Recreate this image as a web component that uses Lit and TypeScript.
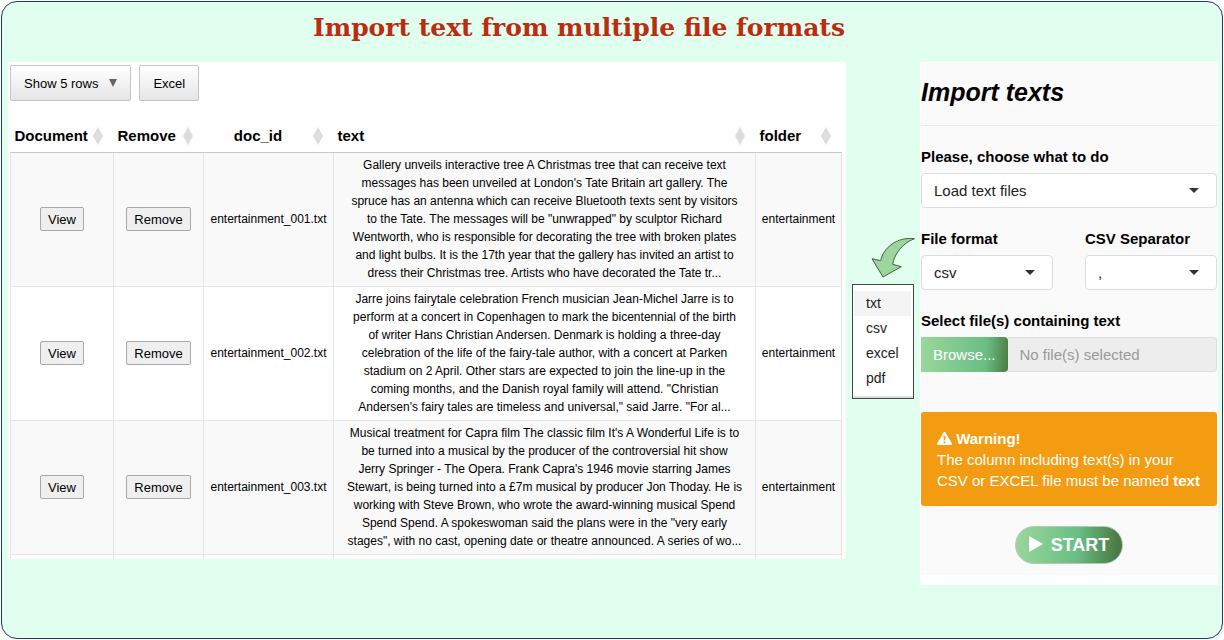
import { LitElement, html, css } from "lit";
import { customElement, state } from "lit/decorators.js";

interface DocumentRow {
  id: string;
  lines: string[];
  folder: string;
}

const ROWS: DocumentRow[] = [
  {
    id: "entertainment_001.txt",
    lines: [
      "Gallery unveils interactive tree A Christmas tree that can receive text",
      "messages has been unveiled at London's Tate Britain art gallery. The",
      "spruce has an antenna which can receive Bluetooth texts sent by visitors",
      'to the Tate. The messages will be "unwrapped" by sculptor Richard',
      "Wentworth, who is responsible for decorating the tree with broken plates",
      "and light bulbs. It is the 17th year that the gallery has invited an artist to",
      "dress their Christmas tree. Artists who have decorated the Tate tr...",
    ],
    folder: "entertainment",
  },
  {
    id: "entertainment_002.txt",
    lines: [
      "Jarre joins fairytale celebration French musician Jean-Michel Jarre is to",
      "perform at a concert in Copenhagen to mark the bicentennial of the birth",
      "of writer Hans Christian Andersen. Denmark is holding a three-day",
      "celebration of the life of the fairy-tale author, with a concert at Parken",
      "stadium on 2 April. Other stars are expected to join the line-up in the",
      'coming months, and the Danish royal family will attend. "Christian',
      'Andersen\'s fairy tales are timeless and universal," said Jarre. "For al...',
    ],
    folder: "entertainment",
  },
  {
    id: "entertainment_003.txt",
    lines: [
      "Musical treatment for Capra film The classic film It's A Wonderful Life is to",
      "be turned into a musical by the producer of the controversial hit show",
      "Jerry Springer - The Opera. Frank Capra's 1946 movie starring James",
      "Stewart, is being turned into a £7m musical by producer Jon Thoday. He is",
      "working with Steve Brown, who wrote the award-winning musical Spend",
      'Spend Spend. A spokeswoman said the plans were in the "very early',
      'stages", with no cast, opening date or theatre announced. A series of wo...',
    ],
    folder: "entertainment",
  },
];

const COLUMNS = [
  { name: "Document", cls: "c-document" },
  { name: "Remove", cls: "c-remove" },
  { name: "doc_id", cls: "c-id" },
  { name: "text", cls: "c-text" },
  { name: "folder", cls: "c-folder" },
];

@customElement("documents-table")
class DocumentsTable extends LitElement {
  static styles = css`
    :host {
      display: block;
      background: #fff;
      padding: 3px 4px 0 2px;
      font-family: "Liberation Sans", Arial, sans-serif;
      color: #000;
    }
    button {
      font-family: inherit;
      color: inherit;
      cursor: pointer;
    }
    .toolbar {
      display: flex;
      gap: 8px;
      margin-bottom: 19px;
    }
    .tool {
      display: flex;
      align-items: center;
      gap: 11px;
      height: 36px;
      padding: 0 13px;
      font-size: 13px;
      border: 1px solid #c4c4c4;
      border-radius: 2px;
      background: linear-gradient(#fff, #e6e6e6);
    }
    .tool svg {
      width: 8px;
      height: 8px;
      fill: #666;
    }
    table {
      width: 100%;
      table-layout: fixed;
      border-collapse: collapse;
    }
    .c-document { width: 103px; }
    .c-remove { width: 90px; }
    .c-id { width: 130px; }
    .c-folder { width: 86px; }
    th {
      height: 32px;
      padding: 0;
      border-bottom: 1px solid #c8c8c8;
    }
    .sort {
      display: flex;
      align-items: center;
      gap: 4px;
      width: 100%;
      padding: 0 11px 0 4px;
      border: 0;
      background: none;
      font-size: 15px;
      line-height: 20px;
      font-weight: 700;
      text-align: left;
    }
    .sort span { flex: 1; }
    .c-id .sort { text-align: center; }
    .sort svg {
      width: 10px;
      height: 18px;
      fill: #ddd;
    }
    td {
      padding: 3px 0 4px;
      border: 1px solid #e4e4e4;
      font-size: 12px;
      line-height: 18px;
      text-align: center;
      white-space: nowrap;
    }
    tbody tr:nth-child(odd) { background: #f9f9f9; }
    .action {
      height: 24px;
      padding: 0 7px;
      font-size: 13px;
      border: 1px solid #a9a9a9;
      border-radius: 2px;
      background: #efefef;
    }
    .next td {
      height: 4px;
      padding: 0;
      border-bottom: 0;
    }
  `;

  render() {
    return html`
      <div class="toolbar">
        <button class="tool" type="button">
          Show 5 rows
          <svg viewBox="0 0 8 8" aria-hidden="true"><path d="M0 0h8L4 8z" /></svg>
        </button>
        <button class="tool" type="button">Excel</button>
      </div>
      <table>
        <thead>
          <tr>
            ${COLUMNS.map(
              (c) => html`<th class=${c.cls} scope="col">
                <button class="sort" type="button">
                  <span>${c.name}</span>
                  <svg viewBox="0 0 10 18" aria-hidden="true"><path d="M5 0l5 9-5 9-5-9z" /></svg>
                </button>
              </th>`
            )}
          </tr>
        </thead>
        <tbody>
          ${ROWS.map(
            (r) => html`<tr>
              <td><button class="action" type="button">View</button></td>
              <td><button class="action" type="button">Remove</button></td>
              <td>${r.id}</td>
              <td>${r.lines.map((l, i) => (i ? html`<br />${l}` : l))}</td>
              <td>${r.folder}</td>
            </tr>`
          )}
          <tr class="next">
            <td></td><td></td><td></td><td></td><td></td>
          </tr>
        </tbody>
      </table>
    `;
  }
}

@customElement("format-menu")
class FormatMenu extends LitElement {
  static styles = css`
    :host {
      display: block;
      font-family: "Liberation Sans", Arial, sans-serif;
    }
    .arrow {
      display: block;
      width: 64px;
      height: 44px;
      margin-bottom: 4px;
      fill: #9bd79c;
      stroke: #4d5a4d;
      stroke-linejoin: round;
    }
    ul {
      list-style: none;
      margin: 0;
      padding: 6px 2px 7px 1px;
      border: 1px solid #444;
      background: #fff;
      box-shadow: inset 0 -2px 1px #ddd;
    }
    li button {
      display: block;
      width: 100%;
      padding: 0 12px;
      border: 0;
      background: none;
      font: 14px/25px "Liberation Sans", Arial, sans-serif;
      color: #222;
      text-align: left;
      cursor: pointer;
    }
    li .active { background: #f4f4f4; }
  `;

  render() {
    return html`
      <svg class="arrow" viewBox="0 0 64 44" aria-hidden="true">
        <path d="M62.500 2.700C45 .5 31 12 28.700 24.700L20 22.700 31 41 49.300 30.700 40.700 28.300C42 19 50 7 62.500 2.700z" />
      </svg>
      <ul>
        ${["txt", "csv", "excel", "pdf"].map(
          (f, i) => html`<li><button type="button" class=${i === 0 ? "active" : ""}>${f}</button></li>`
        )}
      </ul>
    `;
  }
}

@customElement("import-panel")
class ImportPanel extends LitElement {
  static styles = css`
    :host {
      display: block;
      padding: 1px 1px 10px;
      background: #fff;
      font: 15px/20px "Liberation Sans", Arial, sans-serif;
      color: #000;
    }
    .body {
      background: #fafafa;
      padding-bottom: 11px;
    }
    h2 {
      margin: 0;
      padding: 14px 0 18px;
      font-size: 25px;
      line-height: 30px;
      font-style: italic;
      border-bottom: 1px solid #e8e8e8;
    }
    .label {
      display: block;
      margin-bottom: 6px;
      font-weight: 700;
    }
    .field { margin-top: 21px; }
    .pair {
      display: grid;
      grid-template-columns: 1fr 1fr;
      gap: 32px;
    }
    .select { display: grid; }
    .select > * { grid-area: 1 / 1; }
    select {
      appearance: none;
      width: 100%;
      height: 35px;
      padding: 0 12px;
      border: 1px solid #ddd;
      border-radius: 4px;
      background: #fff;
      font: inherit;
      color: #222;
    }
    .select svg {
      align-self: center;
      justify-self: end;
      width: 10px;
      height: 5px;
      margin-right: 18px;
      fill: #333;
      pointer-events: none;
    }
    .file { display: flex; }
    .browse {
      display: flex;
      align-items: center;
      height: 35px;
      box-sizing: border-box;
      padding: 0 12px;
      border-radius: 0 4px 4px 0;
      background: linear-gradient(95deg, #9bd79c 0%, #69be84 74%, #4b7a43 100%);
      color: #fff;
      cursor: pointer;
    }
    .browse input {
      position: absolute;
      width: 1px;
      height: 1px;
      opacity: 0;
    }
    .chosen {
      flex: 1;
      min-width: 0;
      box-sizing: border-box;
      padding: 0 12px;
      border: 1px solid #ddd;
      border-left: 0;
      border-radius: 0 4px 4px 0;
      background: #ededed;
      font: inherit;
    }
    .chosen::placeholder { color: #999; opacity: 1; }
    .alert {
      margin: 40px 0 20px;
      padding: 16px 16px 15px;
      border-radius: 3px;
      background: #f39c12;
      color: #fff;
      line-height: 21px;
    }
    .alert p { margin: 0; }
    .alert svg {
      width: 15px;
      height: 13px;
      vertical-align: -1px;
      fill: #fff;
    }
    .start {
      display: flex;
      align-items: center;
      justify-content: center;
      gap: 8px;
      height: 38px;
      margin: 0 auto;
      padding: 0 13px;
      border: 1px solid #b5c9b5;
      border-radius: 19px;
      background: linear-gradient(95deg, #9bd79c 0%, #69be84 58%, #4b7a43 95%);
      color: #fff;
      font: 700 18px/20px "Liberation Sans", Arial, sans-serif;
      cursor: pointer;
    }
    .start svg {
      width: 14px;
      height: 19px;
      fill: #fff;
    }
  `;

  @state() private fileName = "";

  private onFiles(e: Event) {
    const files = (e.target as HTMLInputElement).files;
    this.fileName = files && files.length ? files[0].name : "";
  }

  private caret() {
    return html`<svg viewBox="0 0 10 5" aria-hidden="true"><path d="M0 0h10L5 5z" /></svg>`;
  }

  render() {
    return html`
      <div class="body">
        <h2>Import texts</h2>
        <div class="field">
          <label class="label" for="action">Please, choose what to do</label>
          <div class="select">
            <select id="action"><option>Load text files</option></select>
            ${this.caret()}
          </div>
        </div>
        <div class="field pair">
          <div>
            <label class="label" for="format">File format</label>
            <div class="select">
              <select id="format">
                <option>txt</option>
                <option selected>csv</option>
                <option>excel</option>
                <option>pdf</option>
              </select>
              ${this.caret()}
            </div>
          </div>
          <div>
            <label class="label" for="separator">CSV Separator</label>
            <div class="select">
              <select id="separator"><option>,</option><option>;</option></select>
              ${this.caret()}
            </div>
          </div>
        </div>
        <div class="field">
          <label class="label" for="chosen">Select file(s) containing text</label>
          <div class="file">
            <label class="browse">Browse...<input type="file" multiple @change=${this.onFiles} /></label>
            <input class="chosen" id="chosen" type="text" readonly placeholder="No file(s) selected" .value=${this.fileName} />
          </div>
        </div>
        <div class="alert">
          <p>
            <svg viewBox="0 0 15 13" aria-hidden="true">
              <path fill-rule="evenodd" d="M6.500.6a1.200 1.200 0 0 1 2 0L14.800 11.300A1.100 1.100 0 0 1 13.900 13H1.100A1.100 1.100 0 0 1 .2 11.300zM6.500 4l.3 4.500h1.400L8.500 4zM6.600 9.500v1.700h1.800V9.500z" />
            </svg>
            <strong>Warning!</strong>
          </p>
          <p>The column including text(s) in your CSV or EXCEL file must be named <strong>text</strong></p>
        </div>
        <button class="start" type="button">
          <svg viewBox="0 0 14 19" aria-hidden="true"><path d="M0 0l14 8-14 8z" /></svg>
          START
        </button>
      </div>
    `;
  }
}

@customElement("app-root")
class AppRoot extends LitElement {
  static styles = css`
    :host {
      display: flex;
      min-height: 100vh;
      box-sizing: border-box;
      padding: 1px;
      background: #fff;
    }
    .frame {
      flex: 1;
      min-width: 0;
      border: 1px solid #1f3864;
      border-radius: 16px;
      background: #e0ffef;
      padding: 0 4px 0 6px;
    }
    h1 {
      margin: 0;
      padding: 10px 68px 18px 0;
      font: 700 25px/32px "DejaVu Serif", serif;
      color: #bb2d12;
      text-align: center;
    }
    .layout {
      display: grid;
      grid-template-columns: minmax(0, 1fr) 62px 298px;
      gap: 6px;
      align-items: start;
    }
    format-menu { margin-top: 174px; }
  `;

  render() {
    return html`
      <main class="frame">
        <h1>Import text from multiple file formats</h1>
        <div class="layout">
          <documents-table></documents-table>
          <format-menu></format-menu>
          <import-panel></import-panel>
        </div>
      </main>
    `;
  }
}
